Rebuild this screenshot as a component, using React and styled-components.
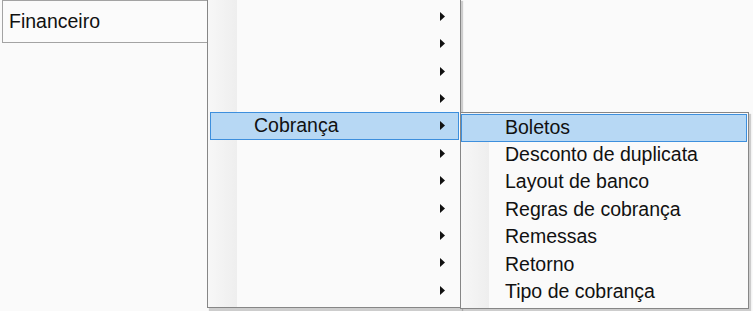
import React from 'react'
import styled, { createGlobalStyle } from 'styled-components'

const GlobalStyle = createGlobalStyle`
  html, body {
    margin: 0;
    padding: 0;
    background: #fafafa;
    overflow: hidden;
  }
  body {
    font-family: "Liberation Sans", Arial, sans-serif;
  }
`

const cobrancaItems = [
  'Boletos',
  'Desconto de duplicata',
  'Layout de banco',
  'Regras de cobrança',
  'Remessas',
  'Retorno',
  'Tipo de cobrança',
]

const financeiroItems = ['', '', '', '', 'Cobrança', '', '', '', '', '', '']

function Arrow() {
  return (
    <svg width="5" height="9" viewBox="0 0 5 9">
      <path d="M0 0 L5 4.5 L0 9 Z" fill="#111" />
    </svg>
  )
}

function App() {
  return (
    <Page>
      <GlobalStyle />
      <MenuBar>
        <TopItem>
          Financeiro
          <Dropdown>
            {financeiroItems.map((label, i) => (
              <Row key={i} $active={label === 'Cobrança'}>
                <Label>{label}</Label>
                <Arrow />
                {label === 'Cobrança' && (
                  <SubMenu>
                    {cobrancaItems.map((sub, j) => (
                      <Row key={sub} $active={j === 0} $sub>
                        <Label>{sub}</Label>
                      </Row>
                    ))}
                  </SubMenu>
                )}
              </Row>
            ))}
          </Dropdown>
        </TopItem>
      </MenuBar>
    </Page>
  )
}

const Page = styled.div`
  width: 753px;
  height: 311px;
  position: relative;
`

const MenuBar = styled.div`
  display: flex;
  padding-left: 2px;
`

const TopItem = styled.div`
  position: relative;
  box-sizing: border-box;
  width: 206px;
  height: 43px;
  display: flex;
  align-items: center;
  padding: 0 0 1px 6px;
  border: 1px solid #a3a3a3;
  background: #fbfbfb;
  color: #111;
  font-size: 19.5px;
`

const Dropdown = styled.div`
  position: absolute;
  left: 204px;
  top: -3px;
  box-sizing: border-box;
  width: 254px;
  height: 310px;
  padding: 3.6px 0 1.2px;
  border: 1px solid #868686;
  background: linear-gradient(
    to right,
    #f7f7f7 0,
    #eeeeee 29px,
    #fafafa 29px
  );
  box-shadow: 2px 3px 1px rgba(0, 0, 0, 0.18);
  z-index: 2;
`

const SubMenu = styled.div`
  position: absolute;
  left: calc(100% + 2px);
  top: -1px;
  box-sizing: border-box;
  width: 289px;
  height: 197px;
  padding: 1px 0 2px;
  border: 1px solid #868686;
  background: linear-gradient(
    to right,
    #f7f7f7 0,
    #eeeeee 28px,
    #fafafa 28px
  );
  box-shadow: 2px 2px 1px rgba(0, 0, 0, 0.18);
  z-index: 3;
`

const Row = styled.div`
  position: relative;
  box-sizing: border-box;
  height: 27.4px;
  margin: ${(p) => (p.$sub ? '0 1px 0 0' : '0 1px 0 2px')};
  display: flex;
  align-items: center;
  justify-content: space-between;
  padding: 0 13px 0 43px;
  border: 1px solid ${(p) => (p.$active ? '#3d8fdd' : 'transparent')};
  background: ${(p) => (p.$active ? '#b7d8f4' : 'transparent')};
  color: #111;
  font-size: 19.5px;
  white-space: nowrap;
`

const Label = styled.span`
  line-height: 1;
  margin-top: -1px;
`

export default App
